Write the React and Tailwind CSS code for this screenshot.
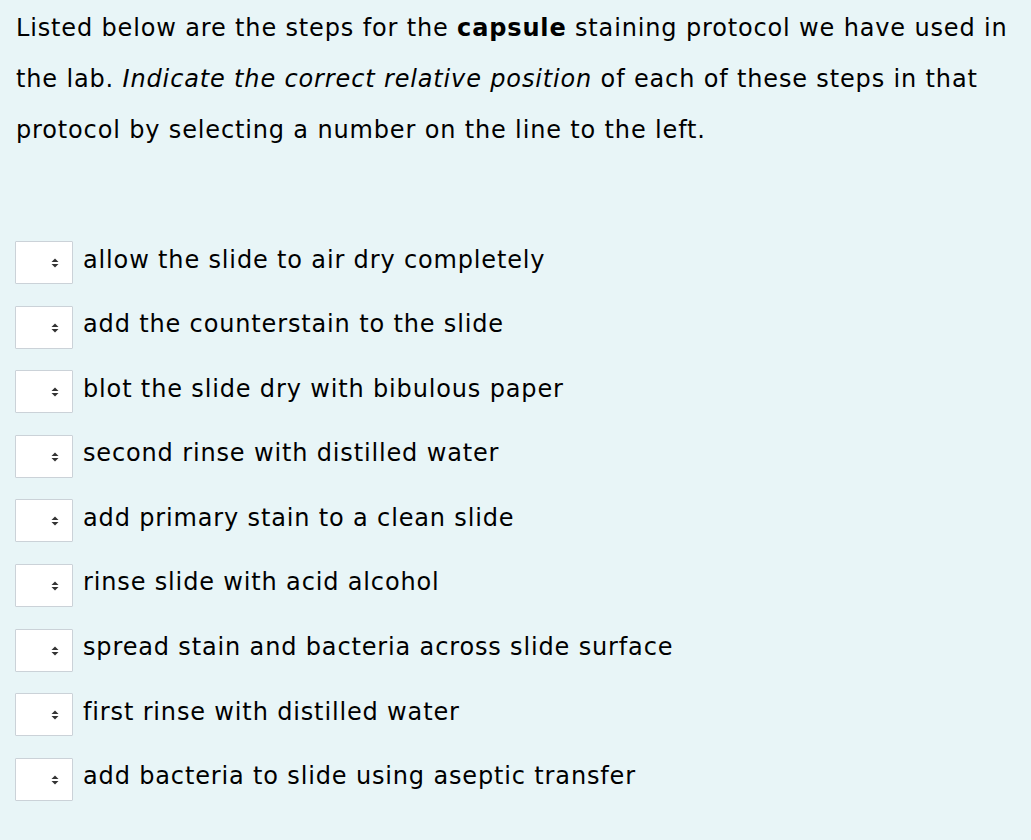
const steps = [
  'allow the slide to air dry completely',
  'add the counterstain to the slide',
  'blot the slide dry with bibulous paper',
  'second rinse with distilled water',
  'add primary stain to a clean slide',
  'rinse slide with acid alcohol',
  'spread stain and bacteria across slide surface',
  'first rinse with distilled water',
  'add bacteria to slide using aseptic transfer',
]

function OrderSelect() {
  return (
    <div className="relative w-[58px] h-[43px] shrink-0">
      <select
        defaultValue=""
        className="appearance-none w-full h-full bg-white border border-[#cbd2d8] rounded-[1px] outline-none"
      >
        <option value=""></option>
        {steps.map((_, i) => (
          <option key={i} value={i + 1}>{i + 1}</option>
        ))}
      </select>
      <svg
        className="absolute left-[36px] top-[17px] pointer-events-none"
        width="8"
        height="10"
        viewBox="0 0 8 10"
      >
        <path d="M4 0.5 L7.5 4 L0.5 4 Z" fill="#333" />
        <path d="M4 9.5 L7.5 6 L0.5 6 Z" fill="#333" />
      </svg>
    </div>
  )
}

export default function App() {
  return (
    <div className="min-h-[840px] bg-[#e8f5f7] px-[16px] pt-[3px] text-black font-['Verdana','DejaVu_Sans',sans-serif] tracking-[0.85px]">
      <p className="text-[24px] leading-[51px]">
        Listed below are the steps for the <strong>capsule</strong> staining protocol we have used in
        <br />
        the lab. <em>Indicate the correct relative position</em> of each of these steps in that
        <br />
        protocol by selecting a number on the line to the left.
      </p>

      <div className="mt-[85px] flex flex-col gap-[21.6px] -ml-px">
        {steps.map((s) => (
          <div key={s} className="flex items-center gap-[10px]">
            <OrderSelect />
            <span className="text-[24px] leading-none -mt-[6px]">{s}</span>
          </div>
        ))}
      </div>
    </div>
  )
}
